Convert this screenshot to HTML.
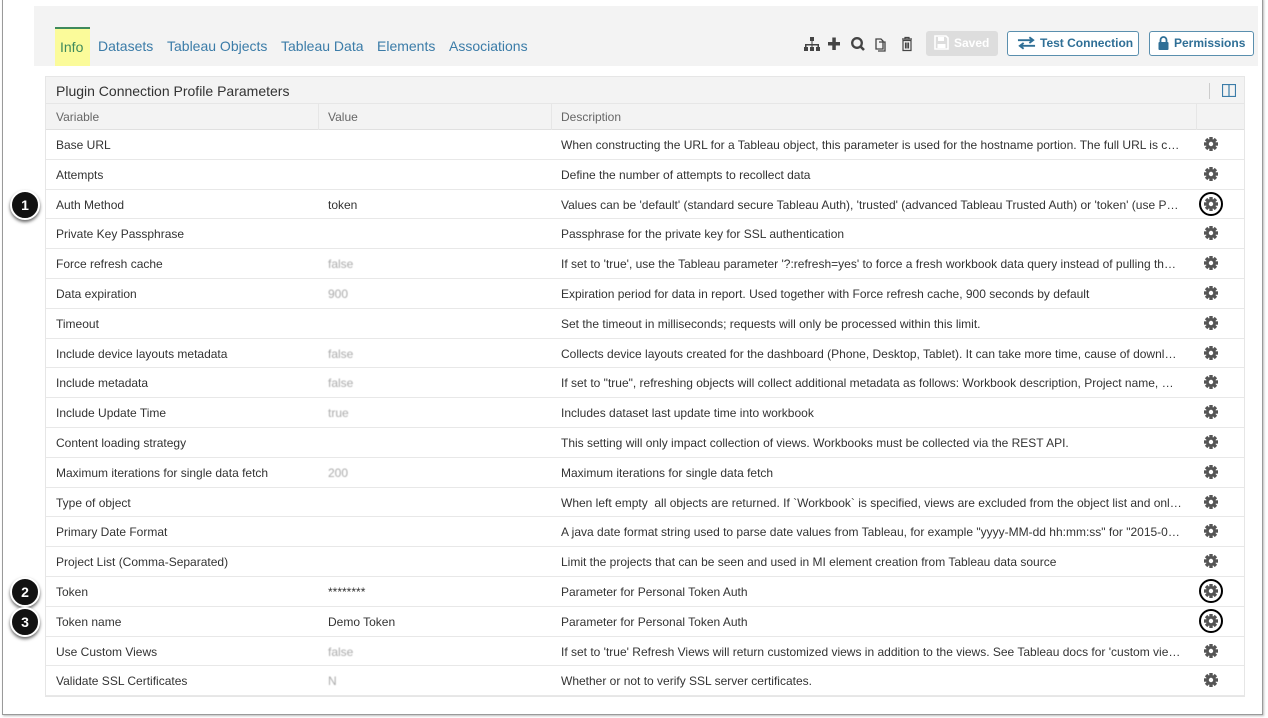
<!DOCTYPE html>
<html><head><meta charset="utf-8"><style>
*{box-sizing:border-box;margin:0;padding:0}
body{width:1268px;height:718px;background:#fff;font-family:"Liberation Sans",Arial,sans-serif;position:relative;overflow:hidden;color:#333}
.frame{position:absolute;left:2px;top:-2px;width:1261px;height:717px;border:1px solid #9a9a9a;box-shadow:1px 1px 2px #bbb}
.hdr{position:absolute;left:34px;top:6px;width:1224px;height:60px;background:#f3f3f3}
.tab{position:absolute;top:38px;font-size:14px;color:#3b7ca8}
.info{position:absolute;left:55px;top:27px;width:35px;height:39px;background:#fbfb9a;border-top:2px solid #3e8a5c;color:#3e8a5c;font-size:14px;padding:10px 0 0 5px}
.btn{position:absolute;top:31px;height:25px;border:1px solid #5a8fae;border-radius:3px;color:#2f6f96;font-weight:bold;font-size:12px;line-height:23px;background:#fff;white-space:nowrap;overflow:hidden}
.btn svg{vertical-align:-3px;margin-right:5px}
.tbl{position:absolute;left:45px;top:76px;width:1200px;border:1px solid #e6e6e6}
.title{height:27px;background:#f3f3f3;font-size:14px;color:#333;padding:6px 10px;position:relative;border-bottom:1px solid #e6e6e6}
.th{height:26px;background:#f3f3f3;font-size:12px;color:#666;position:relative;border-bottom:1px solid #e0e0e0}
.row{height:29.8px;border-bottom:1px solid #e8e8e8;position:relative;font-size:12px;color:#333;background:#fff}
.c1,.c2,.c3{position:absolute;top:8px;white-space:nowrap}
.c1{left:10px}.c2{left:282px}.c3{left:515px;width:621px;overflow:hidden;text-overflow:ellipsis}
.th .c1,.th .c2,.th .c3{top:6px}
.blur{color:#aaa;filter:blur(0.6px)}
.g{position:absolute;left:1157px;top:6px;width:16px;height:16px}
.circ{position:absolute;left:1153px;top:2px;width:24px;height:24px;border:2.5px solid #000;border-radius:50%}
.badge{position:absolute;left:10px;width:30px;height:30px;border-radius:50%;background:#111;border:2px solid #fff;box-shadow:0 2px 3px #666;color:#fff;font-weight:bold;font-size:14px;text-align:center;line-height:26px}
</style></head><body>
<div class="frame"></div>
<div class="hdr"></div>
<div class="info">Info</div>
<div class="tab" style="left:98px">Datasets</div>
<div class="tab" style="left:167px">Tableau Objects</div>
<div class="tab" style="left:281px">Tableau Data</div>
<div class="tab" style="left:377px">Elements</div>
<div class="tab" style="left:449px">Associations</div>
<svg style="position:absolute;left:803px;top:36px" width="115" height="16" viewBox="0 0 115 16" fill="#444">
<rect x="7" y="1" width="4" height="4"/><rect x="8.5" y="5" width="1" height="3"/><rect x="2" y="8" width="14" height="1.5"/><rect x="2" y="8" width="1.5" height="3"/><rect x="14.5" y="8" width="1.5" height="3"/><rect x="8.5" y="8" width="1" height="3"/><rect x="1" y="11" width="4" height="4"/><rect x="7" y="11" width="4" height="4"/><rect x="13" y="11" width="4" height="4"/>
<rect x="25" y="6" width="12" height="3.5"/><rect x="29.3" y="1.5" width="3.5" height="12.5"/>
<circle cx="54" cy="7" r="4.8" fill="none" stroke="#444" stroke-width="2.3"/><path d="M57.5 10.5 L61 14" stroke="#444" stroke-width="2.6"/>
<path d="M73 3h5l2 2v8h-7z M76 6h6v9h-7" fill="none" stroke="#444" stroke-width="1.3"/>
<path d="M99 3h10M102 3v-1.5h4v1.5M100 4.5h8v10h-8z M102.5 6.5v6M104 6.5v6M105.5 6.5v6" fill="none" stroke="#444" stroke-width="1.2"/>
</svg>
<div class="btn" style="left:926px;width:72px;background:#ddd;border-color:#ddd;color:#fff;padding-left:7px"><svg width="15" height="15" viewBox="0 0 15 15"><path d="M1 1h11l2 2v11h-13z" fill="none" stroke="#fff" stroke-width="1.6"/><rect x="4" y="2" width="6" height="4" fill="#fff"/><rect x="3.5" y="9" width="8" height="4" fill="#fff"/></svg>Saved</div>
<div class="btn" style="left:1007px;width:132px;padding-left:9px"><svg width="19" height="14" viewBox="0 0 20 14" style="margin-right:4px"><path d="M1 4h16M13 1l4 3-4 3M19 10h-16M7 7l-4 3 4 3" fill="none" stroke="#2f6f96" stroke-width="2"/></svg>Test Connection</div>
<div class="btn" style="left:1149px;width:105px;padding-left:8px"><svg width="11" height="14" viewBox="0 0 11 14"><path d="M2.5 6V4a3 3 0 0 1 6 0v2" fill="none" stroke="#2f6f96" stroke-width="1.8"/><rect x="0.5" y="6" width="10" height="8" rx="1" fill="#2f6f96"/></svg>Permissions</div>
<div class="tbl">
<div class="title">Plugin Connection Profile Parameters
<span style="position:absolute;left:1163px;top:6px;height:16px;border-left:1px solid #ccc"></span>
<svg style="position:absolute;left:1176px;top:7px" width="14" height="13"><rect x="0.5" y="0.5" width="13" height="12" fill="none" stroke="#3b7ca8" stroke-width="1.2"/><path d="M7 1v12" stroke="#3b7ca8" stroke-width="1.2"/></svg></div>
<div class="th"><span class="c1">Variable</span><span class="c2">Value</span><span class="c3">Description</span>
<span style="position:absolute;left:272px;top:0;height:26px;border-left:1px solid #e6e6e6"></span><span style="position:absolute;left:505px;top:0;height:26px;border-left:1px solid #e6e6e6"></span><span style="position:absolute;left:1150px;top:0;height:26px;border-left:1px solid #e6e6e6"></span></div>
<div id="rows"></div>
</div>
<div class="badge" style="top:190px">1</div>
<div class="badge" style="top:577px">2</div>
<div class="badge" style="top:607px">3</div>
<script>
var d=[["Base URL","","When constructing the URL for a Tableau object, this parameter is used for the hostname portion. The full URL is constructed"],
["Attempts","","Define the number of attempts to recollect data"],
["Auth Method","token","Values can be 'default' (standard secure Tableau Auth), 'trusted' (advanced Tableau Trusted Auth) or 'token' (use Personal"],
["Private Key Passphrase","","Passphrase for the private key for SSL authentication"],
["Force refresh cache","~false","If set to 'true', use the Tableau parameter '?:refresh=yes' to force a fresh workbook data query instead of pulling the cache"],
["Data expiration","~900","Expiration period for data in report. Used together with Force refresh cache, 900 seconds by default"],
["Timeout","","Set the timeout in milliseconds; requests will only be processed within this limit."],
["Include device layouts metadata","~false","Collects device layouts created for the dashboard (Phone, Desktop, Tablet). It can take more time, cause of downloading"],
["Include metadata","~false","If set to \"true\", refreshing objects will collect additional metadata as follows: Workbook description, Project name, Owner"],
["Include Update Time","~true","Includes dataset last update time into workbook"],
["Content loading strategy","","This setting will only impact collection of views. Workbooks must be collected via the REST API."],
["Maximum iterations for single data fetch","~200","Maximum iterations for single data fetch"],
["Type of object","","When left empty&nbsp; all objects are returned. If `Workbook` is specified, views are excluded from the object list and only views"],
["Primary Date Format","","A java date format string used to parse date values from Tableau, for example \"yyyy-MM-dd hh:mm:ss\" for \"2015-01-01\""],
["Project List (Comma-Separated)","","Limit the projects that can be seen and used in MI element creation from Tableau data source"],
["Token","********","Parameter for Personal Token Auth"],
["Token name","Demo Token","Parameter for Personal Token Auth"],
["Use Custom Views","~false","If set to 'true' Refresh Views will return customized views in addition to the views. See Tableau docs for 'custom views'"],
["Validate SSL Certificates","~N","Whether or not to verify SSL server certificates."]];
var gear='<svg class="g" viewBox="0 0 16 16"><g fill="#555"><circle cx="8" cy="8" r="5"/>'+[0,45,90,135].map(function(a){return '<rect x="6.3" y="1" width="3.4" height="14" transform="rotate('+a+' 8 8)"/>'}).join('')+'</g><circle cx="8" cy="8" r="2.2" fill="#fff"/></svg>';
var h='';d.forEach(function(r,i){var v=r[1],b='';if(v[0]=='~'){v=v.slice(1);b=' blur';}
var c=(i==2||i==15||i==16)?'<div class="circ"></div>':'';
h+='<div class="row"><span class="c1">'+r[0]+'</span><span class="c2'+b+'">'+v+'</span><span class="c3">'+r[2]+'</span>'+gear+c+'</div>';});
document.getElementById('rows').innerHTML=h;
</script>
</body></html>
